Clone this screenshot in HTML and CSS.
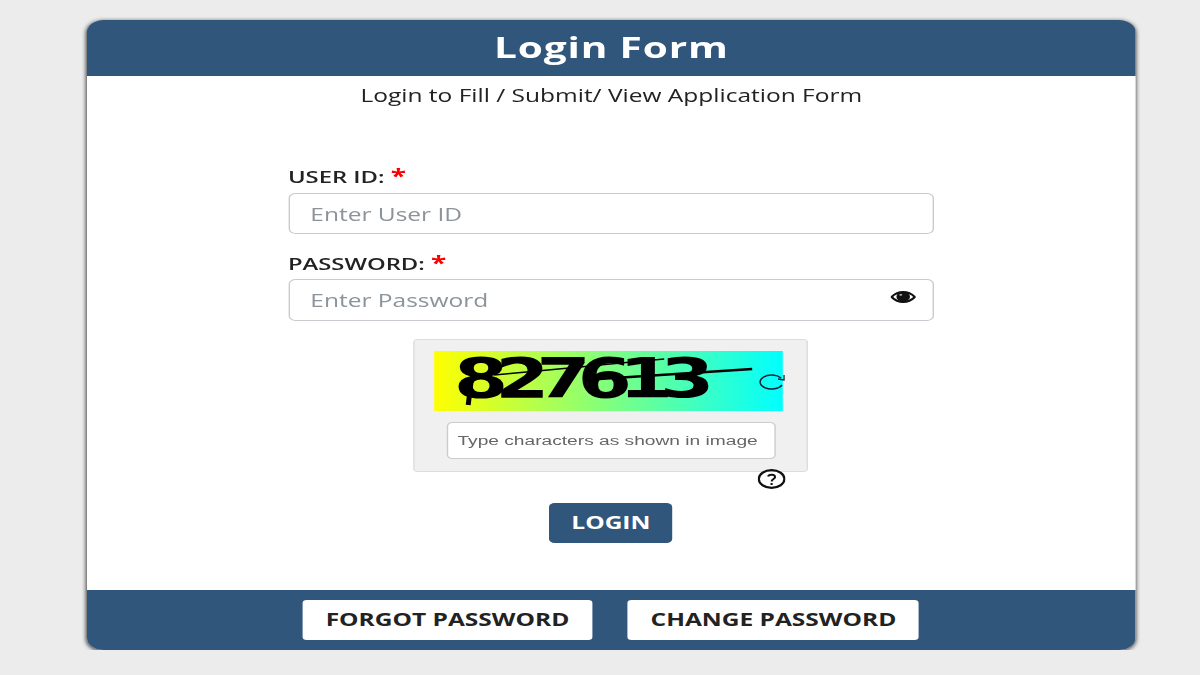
FILE: index.html
```html
<!DOCTYPE html>
<html>
<head>
  <title>Login Form</title>
  <meta name="viewport" content="width=device-width, initial-scale=1">
  <link rel="stylesheet" href="styles.css">
</head>
<body>
  <div class="card">
    <div class="card-head">Login Form</div>
    <div class="card-body">
      <p class="subtitle">Login to Fill / Submit/ View Application Form</p>
      <form class="login-form">
        <label class="field-label" for="userid">USER ID: <span class="req">*</span></label>
        <input class="field" id="userid" type="text" placeholder="Enter User ID">
        <label class="field-label pass-label" for="password">PASSWORD: <span class="req">*</span></label>
        <div class="pass-wrap">
          <input class="field pass-field" id="password" type="password" placeholder="Enter Password">
          <svg class="eye" viewBox="0 0 26 14" preserveAspectRatio="none">
            <path d="M1 7C5 2.500 9 1.200 13 1.200S21 2.500 25 7C21 11.500 17 12.800 13 12.800S5 11.500 1 7Z" fill="#fff" stroke="#111" stroke-width="2.200"/>
            <ellipse cx="13" cy="6.800" rx="7" ry="5.800" fill="#111"/>
            <ellipse cx="10.500" cy="4.500" rx="1.500" ry="1" fill="#bbb"/>
          </svg>
        </div>
        <div class="captcha-box">
          <div class="captcha-img">
            <span class="captcha-text">827613</span>
            <svg class="captcha-lines" viewBox="0 0 349 60" preserveAspectRatio="none">
              <path d="M165 28L318 18" stroke="#000" stroke-width="2.500"/>
              <path d="M60 24L230 8" stroke="#000" stroke-width="1.500"/>
              <path d="M37 30L34 54" stroke="#000" stroke-width="5"/>
            </svg>
            <svg class="refresh" viewBox="0 0 26 16" preserveAspectRatio="none">
              <path d="M22 4A11.500 7 0 1 0 23 11" fill="none" stroke="#123" stroke-width="1.500"/>
              <path d="M19 5L25 6L25 1" fill="none" stroke="#123" stroke-width="1.300"/>
            </svg>
          </div>
          <input class="captcha-input" type="text" placeholder="Type characters as shown in image">
        </div>
        <div class="help-row">
          <svg viewBox="0 0 28 20" preserveAspectRatio="none">
            <ellipse cx="14" cy="10" rx="12.800" ry="8.800" fill="none" stroke="#111" stroke-width="2.200"/>
            <path d="M10.500 7.500C11 5 17.500 5 17.500 8C17.500 10 14 10 14 12.500" fill="none" stroke="#111" stroke-width="2"/>
            <ellipse cx="14" cy="15" rx="1.400" ry="1.100" fill="#111"/>
          </svg>
        </div>
        <div class="login-row"><button class="btn-login" type="button">LOGIN</button></div>
      </form>
    </div>
    <div class="card-foot">
      <button class="btn-foot btn-forgot" type="button">FORGOT PASSWORD</button>
      <button class="btn-foot btn-change" type="button">CHANGE PASSWORD</button>
    </div>
  </div>
</body>
</html>
```

FILE: styles.css
```css
body { margin:0; background:#ececec; font-family:'Open Sans',sans-serif; color:#222; }
/* the whole form is drawn wide, so lay it out narrow and stretch it once */
.card { box-sizing:border-box; width:749px; height:630px; margin:20px 0 0 87px;
        border-radius:12px; overflow:hidden; display:flex; flex-direction:column;
        box-shadow:0 1px 4px rgba(0,0,0,0.75); transform:scaleX(1.4); transform-origin:0 0; }
.card-head { height:56px; flex:none; background:#31567b; color:#fff; font-size:29px; font-weight:700;
             line-height:54px; text-align:center; letter-spacing:.6px; box-shadow:0 1px 2px rgba(0,0,0,0.4); }
.card-body { flex:1; display:flex; flex-direction:column; align-items:center; background:#fff; }
.subtitle { margin:6px 0 0; font-size:17.5px; line-height:26px; color:#222; }
.login-form { width:461.4px; margin:56px .6px 0 0; display:flex; flex-direction:column; }
.field-label { font-size:17px; font-weight:600; line-height:26px; color:#222; }
.req { color:#f00; font-size:20px; font-weight:700; line-height:18px; }
.pass-label { margin-top:17px; margin-bottom:-1px; }
.field { box-sizing:border-box; width:100%; height:41px; margin-top:3px; padding:0 15px; background:#fff;
         border:1px solid #c8ccd0; border-radius:5px; font-family:inherit; font-size:17.5px; outline:none; }
.field::placeholder { color:#8c939a; opacity:1; }
.pass-wrap { position:relative; }
.pass-field { height:42px; display:block; }
.eye { position:absolute; right:12.8px; top:15px; width:18px; height:12px; }
.captcha-box { box-sizing:border-box; width:282px; height:133px; margin:18px 0 0 89.2px; padding:11px 0 0 14.3px;
               background:#f0f0f0; border:1px solid #ddd; border-radius:3px; }
.captcha-img { position:relative; width:249.3px; height:60px;
               background:linear-gradient(90deg,#ffff00 0%,#00ffff 100%); }
.captcha-text { display:block; padding-left:14px; font-family:'DejaVu Sans',sans-serif; font-weight:700;
                font-size:56px; line-height:53px; letter-spacing:-9.5px; color:#000; }
.captcha-lines { position:absolute; left:0; top:0; width:100%; height:100%; }
.refresh { position:absolute; right:-1.4px; top:23px; width:18.6px; height:16px; }
.captcha-input { box-sizing:border-box; display:block; width:235px; height:37px; margin:11px 0 0 8.6px; padding:0 7px;
                 background:#fff; border:1px solid #ccc; border-radius:4px; font-family:'Liberation Sans',sans-serif;
                 font-size:13.7px; outline:none; }
.captcha-input::placeholder { color:#666; opacity:1; }
.help-row { height:17px; display:flex; justify-content:flex-end; padding-right:106px; }
.help-row svg { display:block; width:20px; height:20px; margin-top:-3px; }
.login-row { display:flex; justify-content:center; margin-top:14px; }
.btn-login { width:88.6px; height:40px; background:#31567b; color:#fff; border:0; border-radius:4px; padding:0 0 3px;
             font-family:inherit; font-size:17.5px; font-weight:700; }
.card-foot { height:60px; flex:none; background:#31567b; display:flex; align-items:center; padding-left:154.3px; gap:25.7px; }
.btn-foot { height:40px; background:#fff; color:#222; border:0; border-radius:3px; padding:0 0 3px; font-family:inherit;
            font-size:17.5px; font-weight:700; }
.btn-forgot { width:206.4px; }
.btn-change { width:207.9px; }
```
